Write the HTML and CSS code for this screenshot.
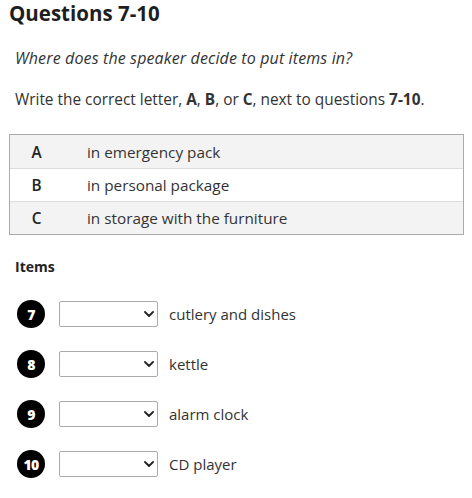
FILE: index.html
```html
<!DOCTYPE html>
<html lang="en">
<head>
<meta charset="utf-8">
<title>Questions 7-10</title>
<link rel="stylesheet" href="styles.css">
</head>
<body>
<div class="page">
  <h1 class="title">Questions 7-10</h1>
  <p class="intro italic">Where does the speaker decide to put items in?</p>
  <p class="intro">Write the correct letter, <b>A</b>, <b>B</b>, or <b>C</b>, next to questions <b>7-10</b>.</p>

  <div class="options">
    <div class="opt shade"><span class="letter">A</span><span class="desc">in emergency pack</span></div>
    <div class="opt"><span class="letter">B</span><span class="desc">in personal package</span></div>
    <div class="opt shade"><span class="letter">C</span><span class="desc">in storage with the furniture</span></div>
  </div>

  <h2 class="items-title">Items</h2>

  <div class="items">
    <div class="item">
      <span class="num">7</span>
      <span class="sel"><select><option></option><option>A</option><option>B</option><option>C</option></select><svg class="chev" viewBox="0 0 10 6" width="10" height="6"><path d="M1 1l4 4 4-4" fill="none" stroke="#222" stroke-width="1.8" stroke-linecap="round" stroke-linejoin="round"/></svg></span>
      <span class="label">cutlery and dishes</span>
    </div>
    <div class="item">
      <span class="num">8</span>
      <span class="sel"><select><option></option><option>A</option><option>B</option><option>C</option></select><svg class="chev" viewBox="0 0 10 6" width="10" height="6"><path d="M1 1l4 4 4-4" fill="none" stroke="#222" stroke-width="1.8" stroke-linecap="round" stroke-linejoin="round"/></svg></span>
      <span class="label">kettle</span>
    </div>
    <div class="item">
      <span class="num">9</span>
      <span class="sel"><select><option></option><option>A</option><option>B</option><option>C</option></select><svg class="chev" viewBox="0 0 10 6" width="10" height="6"><path d="M1 1l4 4 4-4" fill="none" stroke="#222" stroke-width="1.8" stroke-linecap="round" stroke-linejoin="round"/></svg></span>
      <span class="label">alarm clock</span>
    </div>
    <div class="item">
      <span class="num">10</span>
      <span class="sel"><select><option></option><option>A</option><option>B</option><option>C</option></select><svg class="chev" viewBox="0 0 10 6" width="10" height="6"><path d="M1 1l4 4 4-4" fill="none" stroke="#222" stroke-width="1.8" stroke-linecap="round" stroke-linejoin="round"/></svg></span>
      <span class="label">CD player</span>
    </div>
  </div>
</div>
</body>
</html>
```
FILE: styles.css
```css
html, body {
  margin: 0;
  padding: 0;
  background: #fff;
}
body {
  font-family: "Open Sans", "Liberation Sans", sans-serif;
  color: #333;
}
.page {
  padding: 0 8px 0 9px;
}
.title {
  margin: 0;
  padding-top: 1px;
  font-size: 20.5px;
  line-height: 24px;
  font-weight: 700;
  color: #1e1e1e;
}
.intro {
  margin: 0;
  padding-left: 6px;
  font-size: 15.4px;
  line-height: 20px;
}
.intro.italic {
  font-style: italic;
  font-size: 16px;
  letter-spacing: 0.13px;
  margin-top: 23px;
}
.intro + .intro {
  margin-top: 22px;
}
.intro b {
  font-weight: 700;
}
.options {
  margin-top: 24px;
  border: 1px solid #aaa;
  width: 453px;
}
.opt {
  display: flex;
  align-items: center;
  height: 32px;
  font-size: 15.3px;
  border-top: 1px solid #ddd;
}
.opt:first-child {
  border-top: 0;
  height: 33px;
}
.opt.shade {
  background: #f3f3f3;
}
.letter {
  width: 53px;
  text-align: center;
  font-weight: 600;
  color: #222;
}
.desc {
  padding-left: 24px;
}
.items-title {
  margin: 22px 0 0;
  padding-left: 6px;
  font-size: 14px;
  line-height: 20px;
  font-weight: 700;
  color: #222;
}
.items {
  margin-top: 23px;
  display: flex;
  flex-direction: column;
  gap: 22px;
}
.item {
  display: flex;
  align-items: center;
  height: 28px;
}
.num {
  width: 28px;
  height: 28px;
  margin-left: 8px;
  border-radius: 50%;
  background: #000;
  color: #fff;
  font-size: 14px;
  font-weight: 800;
  display: flex;
  align-items: center;
  justify-content: center;
  letter-spacing: -0.6px;
}
.sel {
  position: relative;
  margin-left: 14px;
  width: 99px;
  height: 26px;
}
.sel select {
  -webkit-appearance: none;
  appearance: none;
  width: 99px;
  height: 26px;
  box-sizing: border-box;
  border: 1px solid #aaa;
  border-radius: 2px;
  background: #fff;
  margin: 0;
  padding: 0 6px;
  font: inherit;
}
.chev {
  position: absolute;
  right: 4px;
  top: 10px;
  pointer-events: none;
}
.label {
  margin-left: 11px;
  font-size: 15px;
}
```
